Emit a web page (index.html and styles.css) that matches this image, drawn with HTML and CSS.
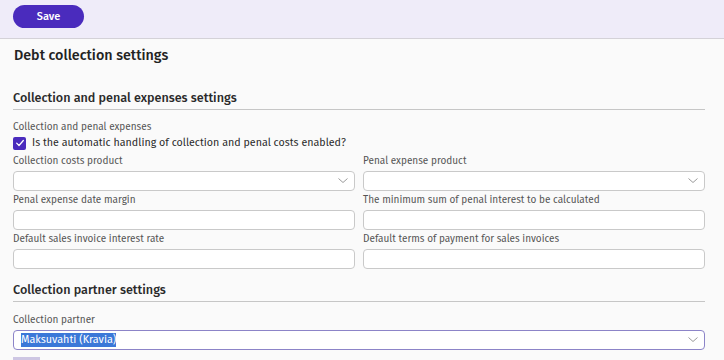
FILE: index.html
```html
<!DOCTYPE html>
<html lang="en">
<head>
    <meta charset="UTF-8">
    <meta name="viewport" content="width=device-width, initial-scale=1.0">
    <title>Debt collection settings</title>
    <link rel="stylesheet" href="styles.css">
</head>
<body>
    <div class="toolbar">
        <button class="save-btn">Save</button>
    </div>

    <div class="page">
        <h1 class="page-title">Debt collection settings</h1>

        <h2 class="section-title">Collection and penal expenses settings</h2>

        <div class="field-label">Collection and penal expenses</div>
        <label class="check-row">
            <span class="checkbox">
                <svg viewBox="0 0 12 12" width="10" height="10"><path d="M2 6.2 L4.8 9 L10 3" fill="none" stroke="#fff" stroke-width="1.5" stroke-linecap="round" stroke-linejoin="round"/></svg>
            </span>
            Is the automatic handling of collection and penal costs enabled?
        </label>

        <div class="grid">
            <div class="field">
                <div class="field-label">Collection costs product</div>
                <div class="input select"><svg class="chevron" viewBox="0 0 10 5"><path d="M0.5 0.5 L5 4.5 L9.5 0.5" /></svg></div>
            </div>
            <div class="field">
                <div class="field-label">Penal expense product</div>
                <div class="input select"><svg class="chevron" viewBox="0 0 10 5"><path d="M0.5 0.5 L5 4.5 L9.5 0.5" /></svg></div>
            </div>
            <div class="field">
                <div class="field-label">Penal expense date margin</div>
                <div class="input"></div>
            </div>
            <div class="field">
                <div class="field-label">The minimum sum of penal interest to be calculated</div>
                <div class="input"></div>
            </div>
            <div class="field">
                <div class="field-label">Default sales invoice interest rate</div>
                <div class="input"></div>
            </div>
            <div class="field">
                <div class="field-label">Default terms of payment for sales invoices</div>
                <div class="input"></div>
            </div>
        </div>

        <h2 class="section-title partner">Collection partner settings</h2>

        <div class="field">
            <div class="field-label">Collection partner</div>
            <div class="input select focused">
                <span class="selected-text">Maksuvahti (Kravia)</span>
                <svg class="chevron" viewBox="0 0 10 5"><path d="M0.5 0.5 L5 4.5 L9.5 0.5" /></svg>
            </div>
        </div>

        <div class="stub"></div>
    </div>
</body>
</html>
```

FILE: styles.css
```css
* {
    margin: 0;
    padding: 0;
    box-sizing: border-box;
}

body {
    font-family: 'Fira Sans', 'Noto Sans', sans-serif;
    background: #fafafa;
    color: #2a2a2a;
    overflow: hidden;
}

.toolbar {
    height: 39px;
    background: #efecf9;
    border-bottom: 1px solid #d4d2d8;
    padding: 5px 13px 0;
}

.save-btn {
    width: 71px;
    height: 23px;
    border: none;
    border-radius: 12px;
    background: #4a2bbd;
    color: #fff;
    font-family: inherit;
    font-size: 11px;
    font-weight: 500;
}

.page {
    padding: 0 19px 0 13px;
}

.page-title {
    font-size: 14.3px;
    font-weight: 500;
    color: #222;
    line-height: 20px;
    margin: 7px 0 0 1px;
}

.section-title {
    font-size: 12.6px;
    font-weight: 500;
    color: #2a2a2a;
    line-height: 18px;
    padding-bottom: 2px;
    border-bottom: 1px solid #c6c6c6;
    margin-top: 23px;
}

.section-title.partner {
    margin-top: 12px;
}

.field-label {
    font-size: 10px;
    line-height: 13px;
    color: #555;
    margin-bottom: 3px;
    white-space: nowrap;
}

.section-title + .field-label {
    margin-top: 11px;
    margin-bottom: 1px;
}

.check-row {
    display: flex;
    align-items: center;
    gap: 6px;
    font-size: 10.7px;
    line-height: 16px;
    color: #2a2a2a;
}

.checkbox {
    width: 13px;
    height: 13px;
    border-radius: 2px;
    background: #4a2bbd;
    display: flex;
    align-items: center;
    justify-content: center;
}

.grid {
    display: grid;
    grid-template-columns: 1fr 1fr;
    column-gap: 8px;
    row-gap: 3px;
    margin-top: 4px;
}

.input {
    position: relative;
    height: 20px;
    background: #fff;
    border: 1px solid #c9c9c9;
    border-radius: 4px;
}

.chevron {
    position: absolute;
    right: 6px;
    top: 6px;
    width: 10px;
    height: 5px;
    fill: none;
    stroke: #9a9a9a;
    stroke-width: 1;
}

.section-title + .field {
    margin-top: 12px;
}

.focused {
    border-color: #8c84c8;
    display: flex;
    align-items: center;
    padding-left: 7px;
}

.selected-text {
    background: #3b78d8;
    color: #fff;
    font-size: 10.8px;
    line-height: 14px;
}

.stub {
    width: 27px;
    height: 10px;
    background: #cdc6e3;
    margin-top: 7px;
}
```
